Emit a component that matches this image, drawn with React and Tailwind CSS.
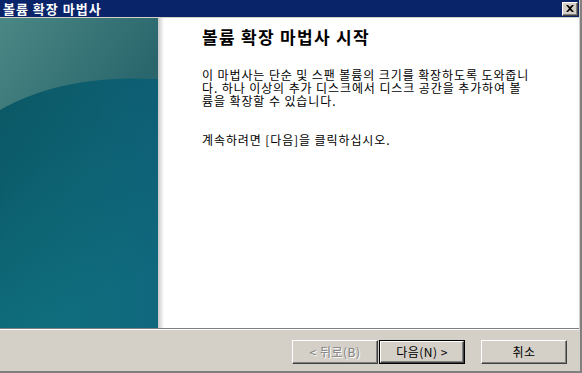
import React from 'react'

function SidePanel() {
  return (
    <svg width="158" height="310" viewBox="0 0 158 310" className="block shrink-0">
      <defs>
        <linearGradient id="low" x1="0" y1="0" x2="0.3" y2="1">
          <stop offset="0" stopColor="#0a5260" />
          <stop offset="0.5" stopColor="#0c5d6c" />
          <stop offset="1" stopColor="#0f6e7d" />
        </linearGradient>
        <linearGradient id="lowr" x1="0" y1="0" x2="1" y2="0">
          <stop offset="0" stopColor="#0f6e78" stopOpacity="0" />
          <stop offset="1" stopColor="#10607e" stopOpacity="0.5" />
        </linearGradient>
        <linearGradient id="up" x1="0" y1="0" x2="1" y2="0.4">
          <stop offset="0" stopColor="#4b8784" />
          <stop offset="1" stopColor="#2a676d" />
        </linearGradient>
      </defs>
      <rect width="158" height="310" fill="url(#low)" />
      <rect width="158" height="310" fill="url(#lowr)" />
      <path d="M0 0 L158 0 L158 61 C100 58 45 66 0 92 Z" fill="url(#up)" />
    </svg>
  )
}

function Button({ children, primary, disabled }) {
  return (
    <div
      className={
        'h-[24px] w-[86px] bg-[#d4d0c8] text-[12px] ' +
        (primary ? 'border border-black' : '')
      }
    >
      <div className="w-full h-full border border-t-white border-l-white border-b-[#404040] border-r-[#404040] shadow-[inset_-1px_-1px_#808080] flex items-center justify-center">
        <span
          className={
            disabled
              ? 'text-[#808080] [text-shadow:1px_1px_#ffffff] tracking-[0.5px]'
              : 'text-black tracking-[0.5px]'
          }
        >
          {children}
        </span>
      </div>
    </div>
  )
}

export default function App() {
  return (
    <div className="w-[582px] h-[373px] bg-[#d4d0c8] font-['Noto_Sans_CJK_KR',sans-serif] flex border-r-2 border-r-[#808080] border-b-2 border-b-[#808080] overflow-hidden">
      <div className="flex-1 flex flex-col border-r border-r-[#d4d0c8]">
        <div className="h-[17px] shrink-0 bg-[#0a246a] flex items-center justify-between pl-[3px] pr-[1px]">
          <span className="text-white font-bold text-[13px] leading-none tracking-[1px] whitespace-nowrap">볼륨 확장 마법사</span>
          <div className="w-[16px] h-[14px] bg-[#d4d0c8] border border-t-white border-l-white border-b-[#404040] border-r-[#404040] shadow-[inset_-1px_-1px_#808080] flex items-center justify-center">
            <svg width="8" height="7" viewBox="0 0 8 7">
              <path d="M0 0 L2 0 L4 2 L6 0 L8 0 L5 3.5 L8 7 L6 7 L4 5 L2 7 L0 7 L3 3.5 Z" fill="#000" />
            </svg>
          </div>
        </div>
        <div className="h-px shrink-0 bg-[#d4d0c8]" />
        <div className="h-[310px] shrink-0 flex bg-white">
          <SidePanel />
          <div className="w-[6px] shrink-0 bg-gradient-to-r from-[#c8c8c8] to-white" />
          <div className="flex-1 pl-[38px] pt-[8px] text-black">
            <h1 className="text-[17px] font-bold leading-[22px] tracking-[1.3px] whitespace-nowrap">볼륨 확장 마법사 시작</h1>
            <p className="mt-[20px] text-[12px] leading-[13px] tracking-[0.9px] whitespace-nowrap">
              이 마법사는 단순 및 스팬 볼륨의 크기를 확장하도록 도와줍니
              <br />
              다. 하나 이상의 추가 디스크에서 디스크 공간을 추가하여 볼
              <br />
              륨을 확장할 수 있습니다.
            </p>
            <p className="mt-[26px] text-[12px] leading-[13px] tracking-[0.9px] whitespace-nowrap">계속하려면 [다음]을 클릭하십시오.</p>
          </div>
        </div>
        <div className="h-px shrink-0 bg-[#808080]" />
        <div className="h-px shrink-0 bg-white" />
        <div className="flex-1 flex items-start justify-end pt-[10px] pr-[12px]">
          <div className="flex gap-[1px]">
            <Button disabled>&lt; 뒤로(B)</Button>
            <Button primary>다음(N) &gt;</Button>
          </div>
          <div className="ml-[16px]">
            <Button>취소</Button>
          </div>
        </div>
      </div>
    </div>
  )
}
